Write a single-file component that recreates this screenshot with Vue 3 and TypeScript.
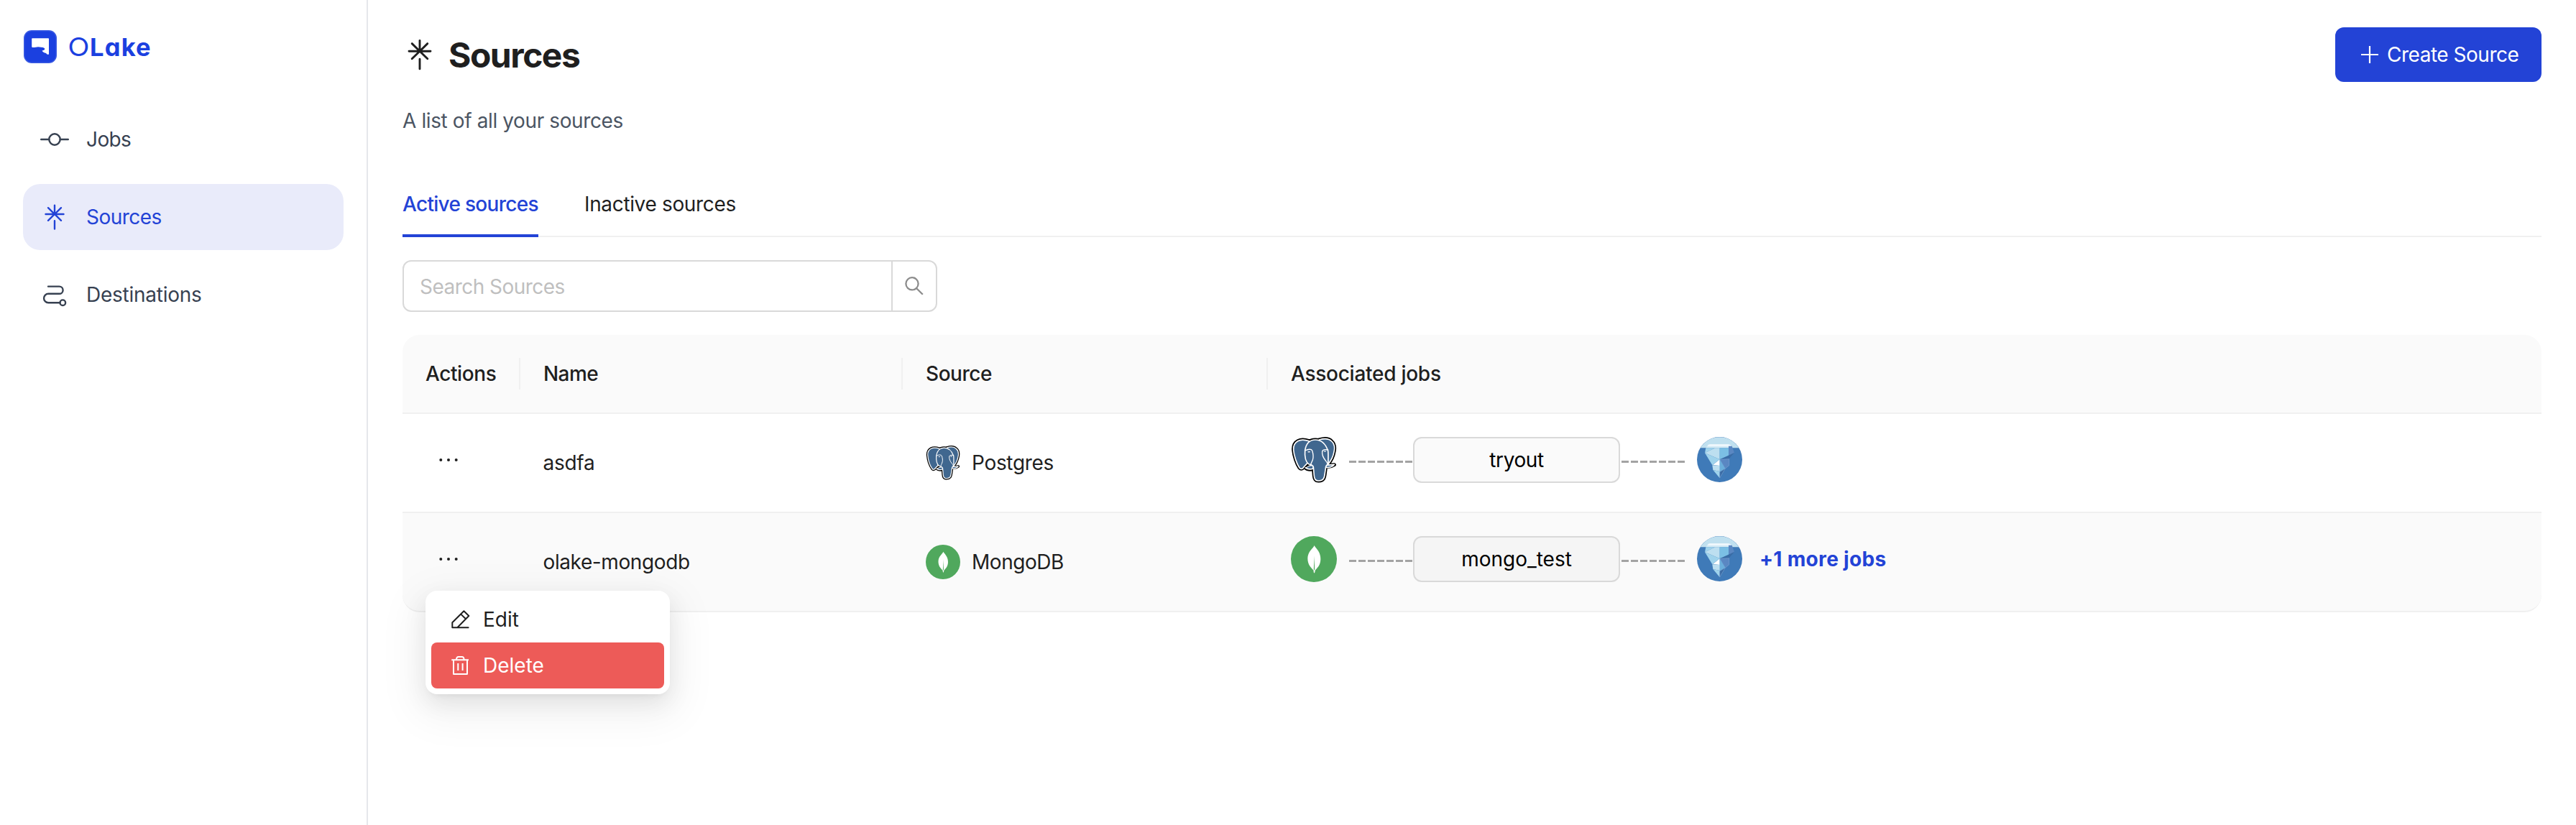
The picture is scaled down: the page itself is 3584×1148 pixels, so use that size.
<script setup lang="ts">
interface NavItem {
  id: 'jobs' | 'sources' | 'destinations'
  label: string
  spacing: string
}

interface SourceRow {
  name: string
  nameSpacing: string
  kind: 'postgres' | 'mongodb'
  kindLabel: string
  kindSpacing: string
  job: string
  jobSpacing: string
  more?: string
  hovered?: boolean
}

const navItems: NavItem[] = [
  { id: 'jobs', label: 'Jobs', spacing: '-0.6px' },
  { id: 'sources', label: 'Sources', spacing: '-0.53px' },
  { id: 'destinations', label: 'Destinations', spacing: '-0.25px' },
]
const activeNav = 'sources'

const columns = [
  { label: 'Actions', spacing: '-0.4px' },
  { label: 'Name', spacing: '-0.6px' },
  { label: 'Source', spacing: '-0.46px' },
  { label: 'Associated jobs', spacing: '-0.27px' },
]

const rows: SourceRow[] = [
  {
    name: 'asdfa', nameSpacing: '-0.27px', kind: 'postgres', kindLabel: 'Postgres', kindSpacing: '-0.32px',
    job: 'tryout', jobSpacing: '-0.43px',
  },
  {
    name: 'olake-mongodb', nameSpacing: '-0.4px', kind: 'mongodb', kindLabel: 'MongoDB', kindSpacing: '-0.46px',
    job: 'mongo_test', jobSpacing: '0', more: '+1 more jobs', hovered: true,
  },
]
</script>

<template>
  <svg class="defs" aria-hidden="true">
    <symbol id="icon-source" viewBox="0 0 40 40">
      <g fill="none" stroke="currentColor" stroke-width="2.4" stroke-linecap="round">
        <path d="M20 3.6V16M20 25.2V36.6M7.5 16H32.5M11 7.2L20 16L29 7.2M11 24.8L20 16L29 24.8" />
      </g>
    </symbol>

    <symbol id="icon-postgres" viewBox="0 0 192 192">
      <g fill="#000" stroke="#000" stroke-width="15" stroke-linejoin="round">
        <path d="M76 17C58 11 42 10 29 17C14 25 10 38 11 54C13 78 24 112 36 129C41 135 47 134 52 128L70 108Z" />
        <path d="M118 12C140 5 160 8 170 18C182 29 184 45 180 62C176 86 167 100 156 113L130 80Z" />
        <path d="M59 56C64 25 80 12 102 12C128 12 146 32 155 58C157 74 155 92 156 112C152 116 147 118 146 124L142 152C140 172 136 182 117 183C103 184 98 176 97 162L94 126C92 117 84 115 75 114C61 104 57 82 59 56Z" />
        <path d="M146 122C158 125 172 122 181 116L166 118L154 112Z" />
        <path d="M94 134C80 137 66 134 60 128L74 120L92 116Z" />
      </g>
      <g fill="#40678f" stroke="#fff" stroke-width="5" stroke-linejoin="round" stroke-linecap="round">
        <path d="M92 118C82 118 68 122 61 129C70 135 84 136 94 131Z" />
        <path d="M146 119C160 115 172 118 181 115C176 124 158 129 146 127Z" />
        <path d="M118 12C140 5 160 8 170 18C182 29 184 45 180 62C176 86 167 100 156 113L140 80Z" />
        <path d="M76 17C58 11 42 10 29 17C14 25 10 38 11 54C13 78 24 112 36 129C41 135 47 134 52 128L70 108Z" />
        <path d="M59 56C64 25 80 12 102 12C128 12 146 32 155 58C157 74 155 92 156 112C152 116 147 118 146 124L142 152C140 172 136 182 117 183C103 184 98 176 97 162L94 126C92 117 84 115 75 114C61 104 57 82 59 56Z" />
      </g>
      <g fill="none" stroke="#fff" stroke-width="4" stroke-linecap="round" stroke-linejoin="round">
        <path d="M60 57C72 50 86 50 89 57C93 70 96 82 91 96C88 105 84 108 83 117" />
        <path d="M155 54C145 52 133 53 131 60C129 74 136 88 145 99C150 105 153 108 153 113" />
      </g>
      <path d="M69 62Q76 58 82 62Q75 67 69 62ZM136 60Q143 56 148 60Q142 65 136 60Z" fill="#fff" />
      <path d="M58 124L72 116L80 117L64 126Z" fill="#000" />
    </symbol>

    <symbol id="icon-mongodb" viewBox="0 0 192 192">
      <circle cx="96" cy="96" r="96" fill="#50a85d" />
      <path d="M98 39C101 49 124 62 124 96C124 122 109 134 102 142L99 154H96L94 142C86 134 70 120 70 94C70 64 92 53 98 39Z" fill="#fff" />
      <path d="M97.500 84L99.500 138L97.500 144L95.500 138Z" fill="#50a85d" />
    </symbol>

    <symbol id="icon-iceberg" viewBox="0 0 189 189">
      <circle cx="94.500" cy="94.500" r="94.500" fill="#3f7ab8" />
      <path d="M14 45.500A94.500 94.500 0 0 1 175 45.500Z" fill="#c0e0ef" />
      <path d="M38 46L44 35Q46 31 54 31H130Q138 31 142 36L148 46Z" fill="#d5ebf5" />
      <path d="M44 38Q46 32 54 31H130Q138 31 144 38Z" fill="#f2f9fd" />
      <path d="M37 45.500L33 67L76 45.500Z" fill="#9fd3ec" />
      <path d="M33 67L76 45.500H95V94Z" fill="#bddff0" />
      <path d="M95 45.500H132V80L95 94Z" fill="#7bbfe4" />
      <path d="M132 38H146L156 66L132 80Z" fill="#5a87c2" />
      <path d="M95 94L156 66L133 92Z" fill="#3a6ca5" />
      <path d="M33 67L95 94L64 118Z" fill="#9fd3ec" />
      <path d="M95 94V120L66 117Z" fill="#fff" />
      <path d="M95 94L134 92V119L118 132Z" fill="#5a87c2" stroke="#86a9d4" stroke-width="1.500" />
      <path d="M95 94L118 132L95 146Z" fill="#6aaedb" />
      <path d="M64 118L95 120V144L67 138Z" fill="#bddff0" />
      <path d="M67 138L95 144V172Z" fill="#9fd3ec" />
      <path d="M95 146L118 132L95 171Z" fill="#3a6ca5" stroke="#86a9d4" stroke-width="1.500" />
    </symbol>
  </svg>

  <div class="app">
    <aside class="sidebar">
      <div class="brand">
        <svg class="brand-mark" viewBox="0 0 46 46">
          <rect width="46" height="46" rx="11" fill="#3b5be2" />
          <rect x="1.500" y="1.500" width="43" height="43" rx="9.500" fill="#1b40e0" />
          <path d="M12 11.300H34.200Q35 11.300 35 12.100V33.200Q34.600 34.400 32.400 33.400Q31.600 31.400 28.500 31.200Q26 30 25.600 28.400Q29.400 28 29.300 25.800Q28.800 24.400 26.600 24L20 23.200L15 23.900H12Q11.200 23.900 11.200 23.100V12.100Q11.200 11.300 12 11.300Z" fill="#fff" />
        </svg>
        <div class="brand-name"><span class="brand-o">O</span><span class="brand-lake">Lake</span></div>
      </div>

      <nav class="nav">
        <a v-for="item in navItems" :key="item.id" class="nav-item" :class="{ active: item.id === activeNav }">
          <svg v-if="item.id === 'jobs'" class="nav-icon" viewBox="0 0 40 40">
            <g fill="none" stroke="currentColor" stroke-width="2.400" stroke-linecap="round">
              <circle cx="20" cy="20" r="7.700" />
              <path d="M1.200 20H12.300M27.700 20H38.800" />
            </g>
          </svg>
          <svg v-else-if="item.id === 'sources'" class="nav-icon"><use href="#icon-source" /></svg>
          <svg v-else class="nav-icon" viewBox="0 0 40 40">
            <g fill="none" stroke="currentColor" stroke-width="2.400" stroke-linecap="round">
              <path d="M11 8.600H26.500A5.100 5.100 0 0 1 26.500 18.800H11.300A6.250 6.250 0 0 0 11.300 31.300H27.500" />
              <circle cx="31.300" cy="31.200" r="3.800" />
            </g>
          </svg>
          <span :style="{ letterSpacing: item.spacing }">{{ item.label }}</span>
        </a>
      </nav>
    </aside>

    <main class="main">
      <header class="page-head">
        <div class="title">
          <svg class="title-icon"><use href="#icon-source" /></svg>
          <h1>Sources</h1>
        </div>
        <button class="create">
          <svg viewBox="0 0 28 28"><path d="M14 2V26M2 14H26" stroke="currentColor" stroke-width="2.200" /></svg>
          <span>Create Source</span>
        </button>
      </header>
      <p class="subtitle">A list of all your sources</p>

      <div class="tabs">
        <div class="tab tab-active">Active sources</div>
        <div class="tab">Inactive sources</div>
      </div>

      <div class="search">
        <div class="search-input">Search Sources</div>
        <div class="search-btn">
          <svg viewBox="0 0 28 28" fill="none" stroke="currentColor" stroke-width="2.300">
            <circle cx="11" cy="10.800" r="8.600" />
            <path d="M17.200 17.200L25.800 25.800" />
          </svg>
        </div>
      </div>

      <div class="table">
        <div class="tr thead">
          <div v-for="col in columns" :key="col.label" class="th" :style="{ letterSpacing: col.spacing }">{{ col.label }}</div>
        </div>
        <div v-for="row in rows" :key="row.name" class="tr row" :class="{ hovered: row.hovered }">
          <div class="td actions">
            <svg class="dots" viewBox="0 0 64 64">
              <g fill="#1f1f1f"><circle cx="21.300" cy="32" r="2" /><circle cx="32" cy="32" r="2" /><circle cx="42.700" cy="32" r="2" /></g>
            </svg>
            <div v-if="row.hovered" class="menu">
              <div class="menu-item">
                <svg viewBox="0 0 26 26" fill="none" stroke="currentColor" stroke-width="2" stroke-linejoin="round" stroke-linecap="round">
                  <path d="M1.300 24.200V17.200L17.400 1.300L24.300 8L8.300 24.200M13.200 5.600L20 12.200M1.300 24.200H23.600" />
                </svg>
                <span class="edit">Edit</span>
              </div>
              <div class="menu-item danger">
                <svg viewBox="0 0 26 26" fill="none" stroke="currentColor" stroke-width="2" stroke-linejoin="round">
                  <path d="M0.300 5.200H24M3 5.200V25H22V5.200M7 5.200Q7 1 10 1H14.600Q17.600 1 17.600 5.200M9.300 10V20M15.600 10V20" />
                </svg>
                <span>Delete</span>
              </div>
            </div>
          </div>
          <div class="td name" :style="{ letterSpacing: row.nameSpacing }">{{ row.name }}</div>
          <div class="td kind">
            <svg class="kind-icon"><use :href="`#icon-${row.kind}`" /></svg>
            <span :style="{ letterSpacing: row.kindSpacing }">{{ row.kindLabel }}</span>
          </div>
          <div class="td jobs">
            <svg class="job-icon"><use :href="`#icon-${row.kind}`" /></svg>
            <i class="dash dash-left"></i>
            <div class="job" :style="{ letterSpacing: row.jobSpacing }">{{ row.job }}</div>
            <i class="dash dash-right"></i>
            <svg class="dest-icon"><use href="#icon-iceberg" /></svg>
            <span v-if="row.more" class="more">{{ row.more }}</span>
          </div>
        </div>
      </div>
    </main>
  </div>
</template>

<style>
body {
  background: #fff;
}
</style>

<style scoped>
.defs {
  display: none;
}
svg {
  display: block;
  flex: none;
}
.app {
  display: flex;
  height: 1148px;
  box-sizing: border-box;
  overflow: hidden;
  background: #fff;
  color: #1f1f1f;
  font-family: Inter, 'Liberation Sans', sans-serif;
  font-size: 28px;
  line-height: 44px;
}
.sidebar {
  width: 512px;
  flex: none;
  box-sizing: border-box;
  border-right: 2px solid #e5e7eb;
  padding: 42px 32px 0;
}
.brand {
  display: flex;
  align-items: center;
  height: 46px;
  padding-left: 1px;
  color: #1b40e0;
}
.brand-mark {
  width: 46px;
  height: 46px;
}
.brand-name {
  display: flex;
  align-items: baseline;
  margin-left: 16px;
  line-height: 46px;
}
.brand-o {
  width: 30px;
  font-family: Lato, sans-serif;
  font-weight: 400;
  font-size: 36px;
}
.brand-lake {
  font-size: 34.5px;
  font-weight: 700;
  letter-spacing: 1.2px;
  font-feature-settings: 'cv11';
}
.nav {
  display: flex;
  flex-direction: column;
  gap: 16px;
  margin-top: 60px;
}
.nav-item {
  display: flex;
  align-items: center;
  gap: 24px;
  width: 446px;
  height: 92px;
  box-sizing: border-box;
  padding-left: 24px;
  border-radius: 24px;
  color: #374151;
}
.nav-item.active {
  background: #e9ebfa;
  color: #2343d6;
}
.nav-icon {
  width: 40px;
  height: 40px;
}
.main {
  flex: 1;
  min-width: 0;
  padding: 38px 48px 0;
}
.page-head {
  display: flex;
  justify-content: space-between;
  align-items: center;
  height: 76px;
}
.title {
  display: flex;
  align-items: center;
  gap: 16px;
}
.title-icon {
  width: 48px;
  height: 48px;
}
h1 {
  margin: 2px 0 0;
  font-size: 48px;
  line-height: 64px;
  font-weight: 700;
  letter-spacing: -1.5px;
}
.create {
  display: flex;
  align-items: center;
  gap: 10px;
  width: 287px;
  height: 76px;
  padding: 0 0 0 34px;
  box-sizing: border-box;
  border: 0;
  border-radius: 12px;
  background: #2343d6;
  color: #fff;
  font: inherit;
  letter-spacing: -0.48px;
  white-space: nowrap;
}
.create svg {
  width: 28px;
  height: 28px;
}
.subtitle {
  margin: 32px 0 0;
  color: #4b5563;
  letter-spacing: -0.39px;
}
.tabs {
  display: flex;
  gap: 64px;
  height: 92px;
  margin-top: 48px;
  box-sizing: border-box;
  border-bottom: 2px solid #f0f0f0;
}
.tab {
  height: 92px;
  box-sizing: border-box;
  padding-top: 24px;
  letter-spacing: -0.35px;
}
.tab-active {
  width: 189px;
  border-bottom: 4px solid #2343d6;
  color: #2343d6;
  font-weight: 500;
  letter-spacing: -0.7px;
  white-space: nowrap;
}
.search {
  display: flex;
  width: 744px;
  height: 72px;
  margin-top: 32px;
  box-sizing: border-box;
  border: 2px solid #d9d9d9;
  border-radius: 12px;
}
.search-input {
  flex: 1;
  padding-left: 22px;
  line-height: 70px;
  color: #bfbfbf;
  letter-spacing: -0.54px;
}
.search-btn {
  display: flex;
  align-items: center;
  justify-content: center;
  width: 60px;
  border-left: 2px solid #d9d9d9;
  color: #8c8c8c;
}
.search-btn svg {
  width: 28px;
  height: 28px;
}
.table {
  margin-top: 32px;
}
.tr {
  display: grid;
  grid-template-columns: 164px 532px 508px 1fr;
  box-sizing: border-box;
  border-bottom: 2px solid #f0f0f0;
}
.thead {
  height: 110px;
  background: #fafafa;
  border-radius: 24px 24px 0 0;
  align-items: center;
}
.th {
  height: 44px;
  padding-left: 32px;
  box-sizing: border-box;
  border-right: 2px solid #f0f0f0;
  font-weight: 500;
}
.th:last-child {
  border-right: 0;
}
.row {
  height: 138px;
}
.row.hovered {
  background: #fafafa;
  border-radius: 0 0 24px 24px;
}
.td {
  display: flex;
  align-items: center;
  padding-left: 32px;
}
.td.name {
  padding-left: 31.5px;
}
.actions {
  position: relative;
  align-items: flex-start;
  padding-top: 32px;
}
.dots {
  width: 64px;
  height: 64px;
}
.kind {
  gap: 16px;
}
.kind-icon {
  width: 48px;
  height: 48px;
}
.jobs {
  align-items: flex-start;
  padding-top: 32px;
}
.job-icon {
  width: 64px;
  height: 64px;
}
.dash {
  height: 3px;
  margin-top: 33px;
  background: repeating-linear-gradient(90deg, #a3a3a3 0 10px, transparent 10px 13px);
}
.dash-left {
  width: 88px;
  margin-left: 17px;
}
.dash-right {
  width: 88px;
  margin-left: 2px;
}
.job {
  width: 288px;
  height: 64px;
  margin-left: 1px;
  box-sizing: border-box;
  border: 2px solid #d9d9d9;
  border-radius: 12px;
  background: rgba(0, 0, 0, 0.02);
  color: #000;
  line-height: 60px;
  text-align: center;
}
.dest-icon {
  width: 63px;
  height: 63px;
  margin-left: 17px;
}
.more {
  margin-left: 24px;
  line-height: 64px;
  color: #2343d6;
  font-weight: 700;
  letter-spacing: 0.33px;
}
.menu {
  position: absolute;
  z-index: 2;
  left: 32px;
  top: 108px;
  width: 340px;
  height: 144px;
  box-sizing: border-box;
  padding: 8px;
  border-radius: 16px;
  background: #fff;
  box-shadow: 0 12px 32px 0 rgba(0, 0, 0, 0.08), 0 6px 12px -8px rgba(0, 0, 0, 0.12),
    0 18px 56px 16px rgba(0, 0, 0, 0.05);
}
.menu-item {
  display: flex;
  align-items: center;
  gap: 18px;
  height: 64px;
  padding-left: 28px;
  border-radius: 8px;
}
.menu-item svg {
  width: 26px;
  height: 26px;
}
.danger {
  background: #ed5b58;
  color: #fff;
}
</style>
